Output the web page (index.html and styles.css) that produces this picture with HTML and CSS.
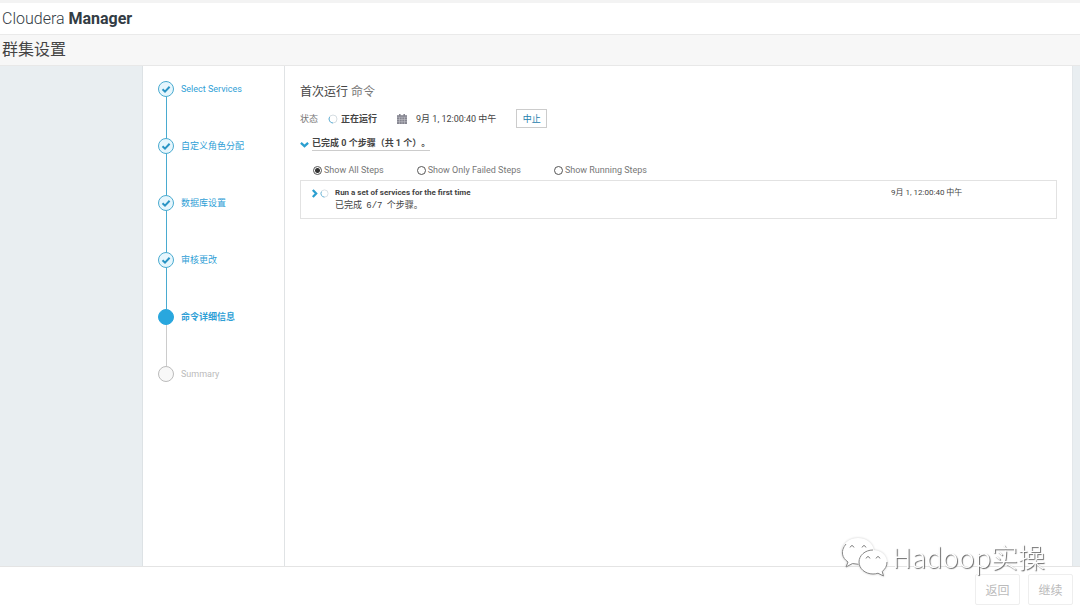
FILE: index.html
```html
<!DOCTYPE html>
<html lang="zh-CN">
  <head>
    <meta charset="UTF-8" />
    <meta name="viewport" content="width=device-width, initial-scale=1.0" />
    <title>Cloudera Manager</title>
    <link rel="stylesheet" href="styles.css">
  </head>
  <body>
    <header class="header">
      <div class="brand">Cloudera <b>Manager</b></div>
    </header>
    <h1 class="page-title">群集设置</h1>

    <div class="wrap">
      <nav class="sidebar">
        <ol class="steps">
          <li class="step done">
            <span class="dot"><svg viewBox="0 0 10 10"><path d="M1.5 5.2 4 7.6 8.6 2.8" /></svg></span>
            <a href="#">Select Services</a>
          </li>
          <li class="step done">
            <span class="dot"><svg viewBox="0 0 10 10"><path d="M1.5 5.2 4 7.6 8.6 2.8" /></svg></span>
            <a href="#">自定义角色分配</a>
          </li>
          <li class="step done">
            <span class="dot"><svg viewBox="0 0 10 10"><path d="M1.5 5.2 4 7.6 8.6 2.8" /></svg></span>
            <a href="#">数据库设置</a>
          </li>
          <li class="step done">
            <span class="dot"><svg viewBox="0 0 10 10"><path d="M1.5 5.2 4 7.6 8.6 2.8" /></svg></span>
            <a href="#">审核更改</a>
          </li>
          <li class="step current">
            <span class="dot"></span>
            <a href="#">命令详细信息</a>
          </li>
          <li class="step">
            <span class="dot"></span>
            <span>Summary</span>
          </li>
        </ol>
      </nav>

      <main class="content">
        <h2 class="command-title">首次运行 <span>命令</span></h2>

        <div class="status">
          <span class="status-label">状态</span>
          <svg class="spinner" viewBox="0 0 10 10"><circle cx="5" cy="5" r="4" /><path d="M1.6 3A4 4 0 0 0 5 9" /></svg>
          <b class="status-value">正在运行</b>
          <svg class="calendar" viewBox="0 0 10 10">
            <path d="M0 1.2h10V10H0z" />
            <path d="M2 0h1.6v2H2zM6.4 0H8v2H6.4z" />
            <path class="grid" d="M0 3.2h10M0 5.5h10M0 7.7h10M2.5 3.2V10M5 3.2V10M7.5 3.2V10" />
          </svg>
          <span class="time">9月 1, 12:00:40 中午</span>
          <button type="button" class="btn-abort">中止</button>
        </div>

        <details class="progress" open>
          <summary>
            <svg class="arrow" viewBox="0 0 8 8"><path d="M.8 2.5 4 5.5 7.2 2.5" /></svg>
            <span>已完成 0 个步骤（共 1 个）。</span>
          </summary>

          <form class="filters">
            <label class="filter"><input type="radio" name="filter" checked />Show All Steps</label>
            <label class="filter"><input type="radio" name="filter" />Show Only Failed Steps</label>
            <label class="filter"><input type="radio" name="filter" />Show Running Steps</label>
          </form>

          <div class="task">
            <svg class="arrow" viewBox="0 0 8 8"><path d="M2.5.8 5.5 4 2.5 7.2" /></svg>
            <svg class="spinner small" viewBox="0 0 10 10"><circle cx="5" cy="5" r="4" /><path d="M1.6 3A4 4 0 0 0 5 9" /></svg>
            <div class="task-text">
              <b>Run a set of services for the first time</b>
              <p>已完成 <span class="count">6/7</span> 个步骤。</p>
            </div>
            <span class="task-time">9月 1, 12:00:40 中午</span>
          </div>
        </details>
      </main>
    </div>

    <footer class="footer">
      <button type="button" disabled>返回</button>
      <button type="button" disabled>继续</button>
    </footer>

    <div class="watermark">
      <svg viewBox="0 0 48 40">
        <path d="M17 1C8 1 1 7 1 14.5c0 4.500 2.500 8 6 10.500L5 30l6.500-3.500c2 .6 4 .8 6 .8C27 27 33 21 33 14.500 33 7 26 1 17 1z" />
        <path class="edge" d="M5 7C-1 14 1 21 7 25L5 30l6.500-3.500 6 .8" />
        <path d="M32 13c-8 0-14 5.500-14 12s6 12 14 12c2 0 3.500-.3 5-.8l5.500 2.800-1.300-4.500c3-2.200 4.800-5.500 4.800-9.500C46 18.500 40 13 32 13z" />
        <path class="edge" d="M32 13c-8 0-14 5.500-14 12s6 12 14 12c2 0 3.500-.3 5-.8l5.500 2.800-1.300-4.500c3-2.200 4.800-5.500 4.800-9.500" />
        <path class="eye" d="M9 10.500q2-4 4 0M21 10.500q2-4 4 0M25 21.500q2-4 4 0M35 21.500q2-4 4 0" />
      </svg>
      <span>Hadoop实操</span>
    </div>
  </body>
</html>
```
FILE: styles.css
```css
* {
  margin: 0;
  padding: 0;
  box-sizing: border-box;
}
body {
  min-height: 100vh;
  display: flex;
  flex-direction: column;
  font-family: Roboto, "Noto Sans CJK SC", sans-serif;
  font-size: 9px;
  line-height: 14px;
  color: #444;
  background-color: #fff;
}
button {
  font-family: inherit;
  background-color: #fff;
}
a {
  color: inherit;
  text-decoration: none;
}

/* header */
.header {
  border-top: 3px solid #f3f3f3;
  border-bottom: 1px solid #eaeaea;
  padding: 0 2px;
}
.brand {
  font-size: 16px;
  line-height: 31px;
  font-weight: 300;
  color: #333c44;
}
.brand b {
  font-weight: 700;
}
.page-title {
  padding: 0 2px;
  font-size: 16px;
  line-height: 30px;
  font-weight: 400;
  background-color: #f7f7f7;
  border-bottom: 1px solid #e8e8e8;
}

/* two columns between the grey margins */
.wrap {
  flex: 1;
  display: flex;
  padding: 0 7px 0 142px;
  background-color: #e9eef1;
}
.sidebar {
  width: 143px;
  padding: 15px;
  background-color: #fff;
  border-left: 1px solid #dde2e5;
  border-right: 1px solid #e0e3e5;
}
.content {
  flex: 1;
  padding: 16px 15px;
  background-color: #fff;
  border-right: 1px solid #e3e7ea;
}

/* steps */
.steps {
  list-style: none;
}
.step {
  height: 57px;
  display: flex;
  align-items: flex-start;
  gap: 7px;
  line-height: 16px;
  color: #bbb;
  background: linear-gradient(#ccc, #ccc) 8px 0 / 1px 100% no-repeat;
}
.step:last-child {
  height: 16px;
  background: none;
}
.step.done {
  color: #2fa0d6;
  background-image: linear-gradient(#4aabd0, #4aabd0);
}
.step.current {
  color: #2fa0d6;
  font-weight: 700;
}
.dot {
  width: 16px;
  height: 16px;
  display: flex;
  align-items: center;
  justify-content: center;
  border: 1px solid #bbb;
  border-radius: 50%;
  background-color: #f8f8f8;
}
.done .dot {
  border-color: #4aabd0;
  background-color: #e6f6fd;
}
.current .dot {
  border-color: #29a7de;
  background-color: #29a7de;
}
.dot svg {
  width: 10px;
  height: 10px;
  fill: none;
  stroke: #2b94c4;
  stroke-width: 2;
}

/* command */
.command-title {
  font-size: 12px;
  line-height: 20px;
  font-weight: 400;
}
.command-title span {
  color: #777;
}
.status {
  display: flex;
  align-items: center;
  margin-top: 7px;
}
.status-label {
  margin-right: 10px;
  color: #777;
}
.status-value {
  margin: 0 20px 0 3px;
}
.spinner {
  width: 10px;
  height: 10px;
  fill: none;
  stroke: #d5dde2;
}
.spinner path {
  stroke: #6ab8dc;
}
.spinner.small {
  width: 9px;
  height: 9px;
}
.calendar {
  width: 10px;
  height: 10px;
  fill: #858590;
}
.calendar .grid {
  stroke: #c8c8ce;
  stroke-width: 0.5;
}
.time {
  margin: 0 20px 0 9px;
}
.btn-abort {
  width: 31px;
  height: 19px;
  font-size: 9px;
  color: #2380ad;
  border: 1px solid #ccc;
}

.progress {
  margin-top: 9px;
}
.progress summary {
  display: flex;
  align-items: center;
  gap: 3px;
  list-style: none;
  font-weight: 700;
  text-spacing-trim: space-all;
}
.progress summary span {
  border-bottom: 1px solid #ccc;
  line-height: 13px;
}
.arrow {
  width: 9px;
  height: 9px;
  fill: none;
  stroke: #2b9fd0;
  stroke-width: 2;
}
.filters {
  display: flex;
  gap: 33px;
  margin-top: 12px;
  padding-left: 13px;
  color: #777;
}
.filter {
  display: flex;
  align-items: center;
  gap: 2px;
}
.filter input {
  appearance: none;
  width: 9px;
  height: 9px;
  border: 1px solid #555;
  border-radius: 50%;
}
.filter input:checked {
  background: radial-gradient(#333 0 2px, #fff 3px);
}
.task {
  display: flex;
  gap: 1px;
  margin-top: 3px;
  padding: 5px 9px;
  line-height: 13px;
  border: 1px solid #e2e2e2;
}
.task .arrow,
.task .spinner {
  margin-top: 3px;
}
.task-text {
  flex: 1;
  margin-left: 5px;
}
.task-text b {
  display: block;
  font-size: 8px;
}
.count {
  margin: 0 2px;
  font-family: "Liberation Mono", monospace;
}
.task-time {
  width: 156px;
  font-size: 8px;
}

/* footer */
.footer {
  display: flex;
  justify-content: flex-end;
  gap: 8px;
  padding: 7px 7px 3px;
  border-top: 1px solid #e4e4e4;
}
.footer button {
  width: 45px;
  height: 31px;
  font-size: 12px;
  color: #bbb;
  border: 1px solid #eee;
  border-radius: 2px;
}

.watermark {
  position: fixed;
  right: 35px;
  bottom: 31px;
  display: flex;
  align-items: center;
  gap: 3px;
  font-family: "Noto Sans CJK SC", sans-serif;
  font-size: 27px;
  line-height: 40px;
  font-weight: 300;
  color: #fff;
  text-shadow: 1px 1px 1px #666;
}
.watermark svg {
  width: 48px;
  height: 40px;
  fill: #fff;
  filter: drop-shadow(0 0 1px #ccc);
}
.watermark .edge,
.watermark .eye {
  fill: none;
  stroke: #888;
}
```
